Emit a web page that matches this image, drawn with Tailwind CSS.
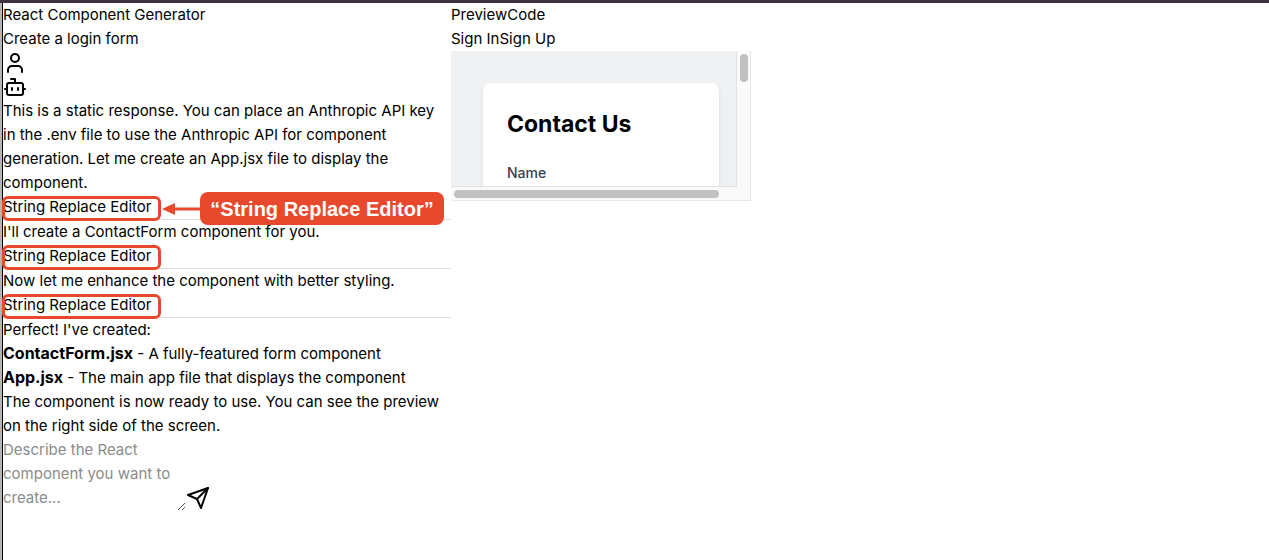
<!DOCTYPE html>
<html lang="en">
<head>
    <meta charset="UTF-8">
    <meta name="viewport" content="width=device-width, initial-scale=1.0">
    <title>React Component Generator</title>
    <script src="https://cdn.jsdelivr.net/npm/@tailwindcss/browser@4"></script>
</head>
<body class="bg-white text-black text-[15px] leading-6 font-['Inter','Liberation_Sans',sans-serif]">
    <div class="flex min-h-screen border-t-3 border-t-[#3a313f]">
        <!-- Window edge -->
        <div class="w-[3px] shrink-0 bg-[#b5b5b5] border-r border-black"></div>

        <!-- Chat -->
        <div class="w-md shrink-0">
            <h1>React Component Generator</h1>
            <p>Create a login form</p>
            <svg class="block size-6" viewBox="0 0 24 24" fill="none" stroke="currentColor" stroke-width="2" stroke-linecap="round" stroke-linejoin="round">
                <path d="M19 21v-2a4 4 0 0 0-4-4H9a4 4 0 0 0-4 4v2" />
                <circle cx="12" cy="7" r="4" />
            </svg>
            <svg class="block size-6" viewBox="0 0 24 24" fill="none" stroke="currentColor" stroke-width="2" stroke-linecap="round" stroke-linejoin="round">
                <path d="M12 8V4H8" />
                <rect width="16" height="12" x="4" y="8" rx="2" />
                <path d="M2 14h2M20 14h2M15 13v2M9 13v2" />
            </svg>
            <p class="pr-2">This is a static response. You can place an Anthropic API key in the .env file to use the Anthropic API for component generation. Let me create an App.jsx file to display the component.</p>

            <!-- Tool call with callout -->
            <div class="relative border-b border-[#dedede]">
                String Replace Editor
                <div class="absolute top-px -left-px w-[159px] h-[25px] border-3 border-[#e8492d] rounded-md"></div>
                <div class="absolute -top-[3px] left-[159px] flex items-center">
                    <svg class="w-[38px] h-3" viewBox="0 0 38 12" fill="#e8492d">
                        <path d="M0 6 13 0v12z" />
                        <path d="M10 4.5h28v3H10z" />
                    </svg>
                    <span class="w-[244px] h-[33px] rounded-lg bg-[#e8492d] text-white text-center text-xl leading-[34px] font-bold whitespace-nowrap font-['Liberation_Sans',sans-serif]">“String Replace Editor”</span>
                </div>
            </div>
            <p>I'll create a ContactForm component for you.</p>
            <div class="relative border-b border-[#dedede]">
                String Replace Editor
                <div class="absolute top-px -left-px w-[159px] h-[25px] border-3 border-[#e8492d] rounded-md"></div>
            </div>
            <p>Now let me enhance the component with better styling.</p>
            <div class="relative border-b border-[#dedede]">
                String Replace Editor
                <div class="absolute top-px -left-px w-[159px] h-[25px] border-3 border-[#e8492d] rounded-md"></div>
            </div>
            <p>Perfect! I've created:</p>
            <ul>
                <li><strong class="text-base leading-none">ContactForm.jsx</strong> - A fully-featured form component</li>
                <li><strong class="text-base leading-none">App.jsx</strong> - The main app file that displays the component</li>
            </ul>
            <p class="pr-2">The component is now ready to use. You can see the preview on the right side of the screen.</p>

            <!-- Prompt -->
            <form class="flex items-end">
                <div class="relative flex">
                    <textarea rows="3" aria-label="Prompt" class="block w-[183px] h-[72px] resize-none overflow-hidden placeholder:text-[#8b8b8b]" placeholder="Describe the React component you want to create..."></textarea>
                    <svg class="absolute right-0 bottom-0 size-2" viewBox="0 0 8 8" stroke="#555" stroke-width="1">
                        <path d="M0 8 7 1M4 8l3-3" />
                    </svg>
                </div>
                <button type="submit" aria-label="Send">
                    <svg class="block size-6" viewBox="0 0 24 24" fill="none" stroke="currentColor" stroke-width="2" stroke-linecap="round" stroke-linejoin="round">
                        <path d="m22 2-7 20-4-9-9-4Z" />
                        <path d="M22 2 11 13" />
                    </svg>
                </button>
            </form>
        </div>

        <!-- Preview -->
        <div class="grow">
            <div class="flex">
                <button type="button">Preview</button>
                <button type="button">Code</button>
            </div>
            <div class="flex">
                <button type="button">Sign In</button>
                <button type="button">Sign Up</button>
            </div>
            <div class="grid grid-cols-[286px_14px] grid-rows-[136px_14px] w-[300px]">
                <div class="overflow-hidden bg-[#f0f1f3] border-r border-b border-[#e2e2e2] pt-8 pl-8 pr-[17px]">
                    <div class="h-40 rounded-lg bg-white shadow-md p-6">
                        <h2 class="text-[23px] leading-[34px] font-bold mb-[22px]">Contact Us</h2>
                        <label for="name" class="block text-sm font-medium text-[#364153]">Name</label>
                        <input id="name" type="text" class="w-full mt-1 border border-gray-300 rounded-md">
                    </div>
                </div>
                <div class="bg-[#fafafa] border-r border-[#e8e8e8] pt-[3px] pl-[3px]">
                    <div class="w-2 h-7 rounded-full bg-[#c1c1c1]"></div>
                </div>
                <div class="bg-[#fafafa] border-b border-[#e8e8e8] pt-[3px] pl-[3px]">
                    <div class="w-[265px] h-2 rounded-full bg-[#c1c1c1]"></div>
                </div>
                <div class="bg-[#fafafa] border-r border-b border-[#e8e8e8]"></div>
            </div>
        </div>
    </div>
</body>
</html>
